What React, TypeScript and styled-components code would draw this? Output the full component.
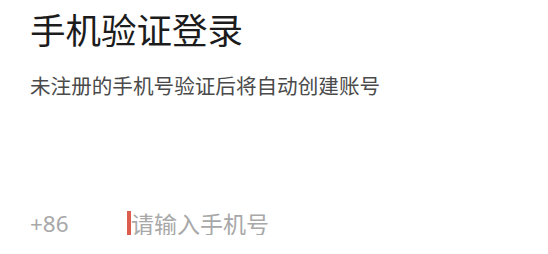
import React, { useState } from "react";
import styled, { createGlobalStyle } from "styled-components";

const GlobalStyle = createGlobalStyle`
  html, body {
    margin: 0;
    padding: 0;
    background: #ffffff;
  }
  body {
    font-family: "Noto Sans CJK SC", "Noto Sans", sans-serif;
  }
`;

const Page = styled.div`
  width: 548px;
  height: 254px;
  box-sizing: border-box;
  padding: 5px 30px 0;
  display: flex;
  flex-direction: column;
  background: #fff;
`;

const Title = styled.h1`
  margin: 0;
  font-size: 35.5px;
  font-weight: 400;
  line-height: 48px;
  color: #1c1c1c;
`;

const Hint = styled.p`
  margin: 18px 0 0;
  font-size: 20.6px;
  line-height: 28px;
  color: #4a4a4a;
`;

const PhoneRow = styled.div`
  margin-top: 109px;
  display: flex;
  align-items: center;
  height: 30px;
`;

const AreaCode = styled.span`
  width: 97px;
  flex: none;
  font-family: "Noto Sans", "Noto Sans CJK SC", sans-serif;
  font-size: 22.5px;
  color: #a8a8a8;
`;

const Input = styled.input`
  flex: 1;
  border: 0;
  outline: 0;
  padding: 0;
  font-family: "Noto Sans CJK SC", sans-serif;
  font-size: 23px;
  color: #333;
  background: transparent;
  border-left: 4px solid #dc5d4d;
  height: 24px;
  line-height: 24px;
  &::placeholder {
    color: #a8a8a8;
  }
`;

const App = () => {
  const [phone, setPhone] = useState("");

  return (
    <>
      <GlobalStyle />
      <Page>
        <Title>手机验证登录</Title>
        <Hint>未注册的手机号验证后将自动创建账号</Hint>
        <PhoneRow>
          <AreaCode>+86</AreaCode>
          <Input
            value={phone}
            onChange={(e) => setPhone(e.target.value)}
            placeholder="请输入手机号"
          />
        </PhoneRow>
      </Page>
    </>
  );
};

export default App;
